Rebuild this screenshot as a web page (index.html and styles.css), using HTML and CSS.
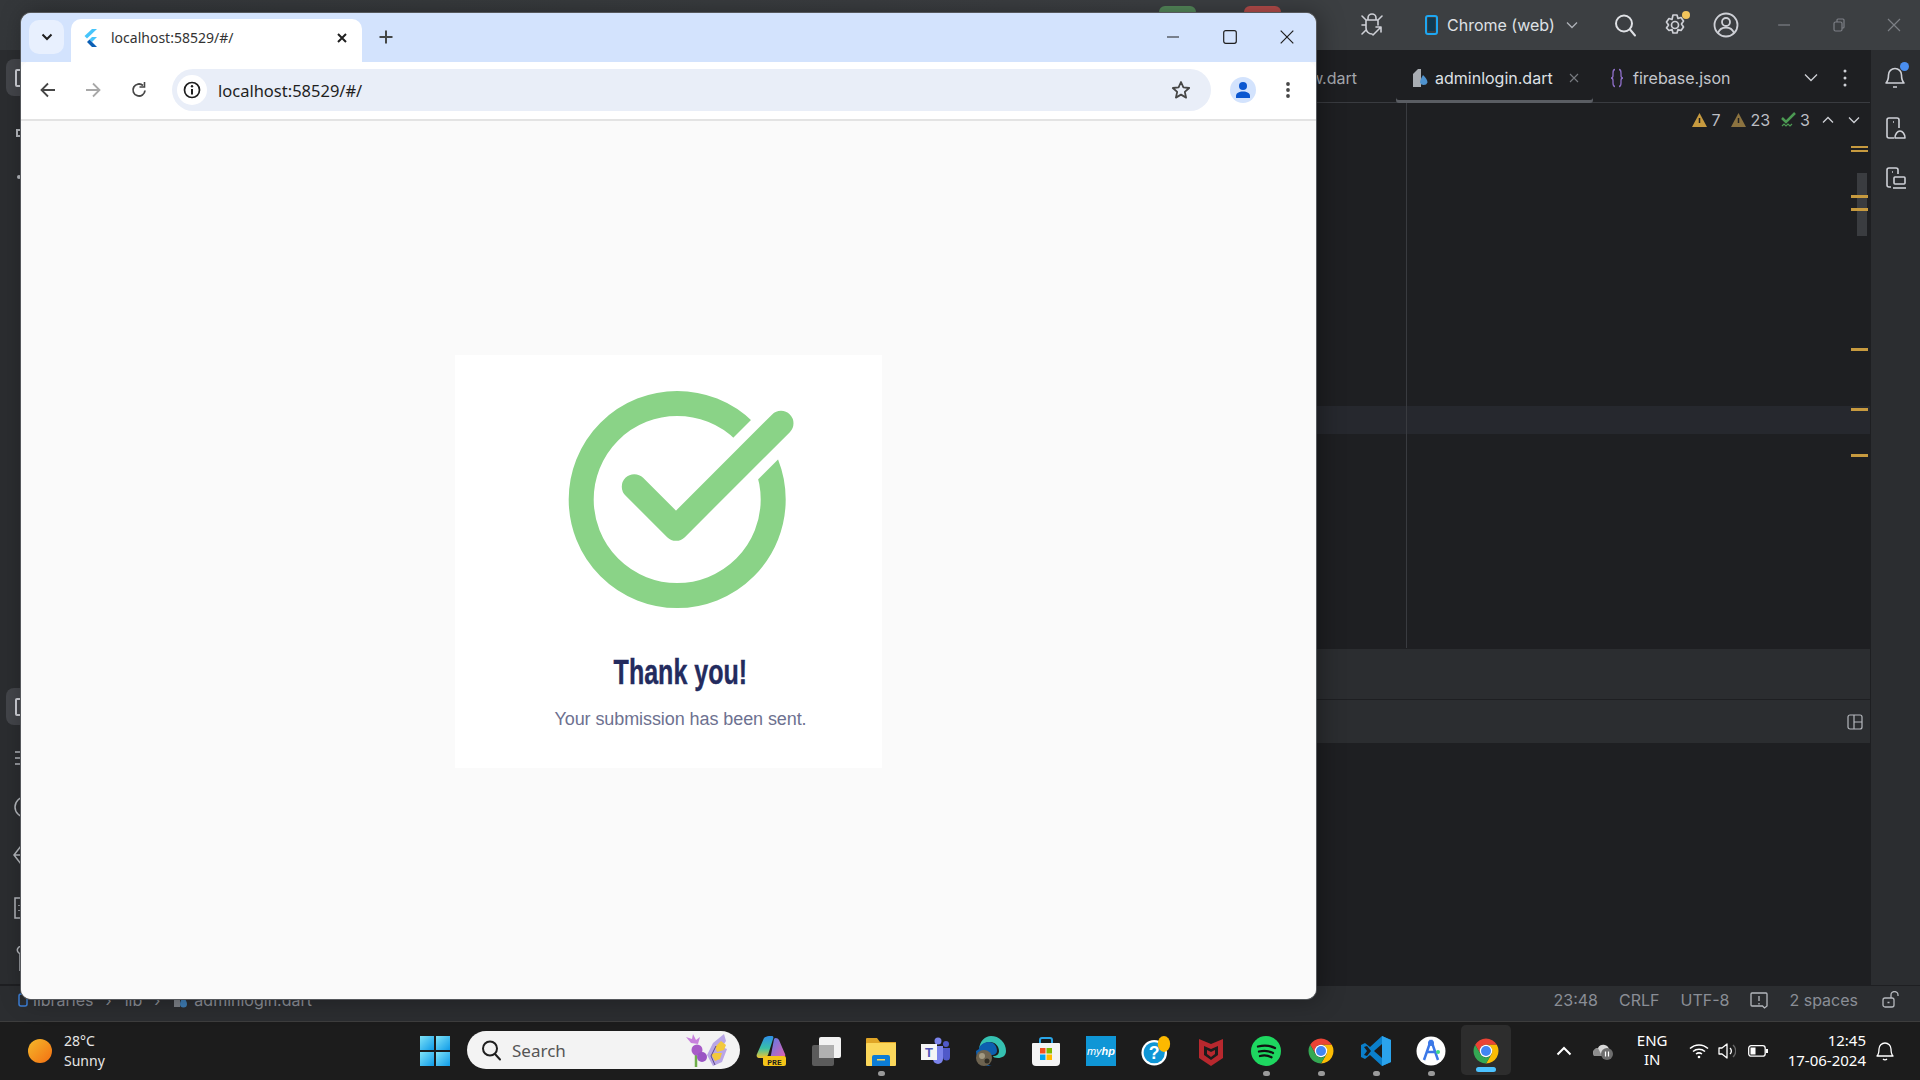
FILE: index.html
```html
<!DOCTYPE html>
<html lang="en">
<head>
<meta charset="utf-8">
<title>localhost:58529/#/</title>
<link rel="stylesheet" href="styles.css">
</head>
<body>
<div class="desktop">

  <header class="titlebar">
    <span class="run-pill green"></span>
    <span class="run-pill red"></span>
    <svg class="ic bug" width="26" height="26" viewBox="0 0 26 26" fill="none" stroke="#ced0d6" stroke-width="1.6" stroke-linecap="round" stroke-linejoin="round"><path d="M9 7V6a4 4 0 0 1 8 0v1M7 8h12v5M7 8v8a6 6 0 0 0 6 6M3 4l4 4M3 13h4M3 22l4-4M23 4l-4 4M14 23l8-8M17 15h5v5"/></svg>
    <svg class="ic phone" width="13" height="20" viewBox="0 0 13 20" fill="none"><rect x="1" y="1" width="11" height="18" rx="2" stroke="#1ea7f2" stroke-width="2"/><rect x="3" y="3" width="7" height="13" fill="#0f3a52"/></svg>
    <span class="run-target">Chrome (web)</span>
    <svg class="chev" width="12" height="8" viewBox="0 0 12 8" fill="none" stroke="#aeb1b7" stroke-width="1.3"><path d="M1 1.5l5 5 5-5"/></svg>
    <div class="tb-actions">
      <svg width="24" height="24" viewBox="0 0 24 24" fill="none" stroke="#dfe1e5" stroke-width="2" stroke-linecap="round"><circle cx="11" cy="10.500" r="8"/><path d="M17 16.500l5 6"/></svg>
      <span class="gear-wrap">
        <svg width="24" height="26" viewBox="0 0 24 26" fill="none" stroke="#ced0d6" stroke-width="1.7" stroke-linejoin="round"><path d="M10 3h4l1 3.500 3-1 2.500 3.500-2 3 2 3-2.500 3.500-3-1-1 3.500h-4l-1-3.500-3 1L3.500 16l2-3-2-3L6 6.500l3 1z"/><circle cx="12" cy="13" r="3.500"/></svg>
        <i class="gear-dot"></i>
      </span>
      <svg width="26" height="26" viewBox="0 0 26 26" fill="none" stroke="#ced0d6" stroke-width="1.8"><circle cx="13" cy="13" r="11.500"/><circle cx="13" cy="10" r="4"/><path d="M5 21c1.500-4 4-5.500 8-5.500s6.500 1.500 8 5.500"/></svg>
    </div>
    <div class="win-actions">
      <svg width="24" height="24" viewBox="0 0 24 24" fill="none" stroke="#7c7f85" stroke-width="1.2"><path d="M6 12h12"/></svg>
      <svg width="24" height="24" viewBox="0 0 24 24" fill="none" stroke="#7c7f85" stroke-width="1.2"><rect x="7" y="9" width="8" height="9" rx="1.500"/><path d="M10 9V7a1 1 0 0 1 1-1h5a1 1 0 0 1 1 1v7a1 1 0 0 1-1 1h-1"/></svg>
      <svg width="24" height="24" viewBox="0 0 24 24" fill="none" stroke="#7c7f85" stroke-width="1.2"><path d="M6 6l12 12M18 6L6 18"/></svg>
    </div>
  </header>

  <div class="ide">
    <aside class="left-rail">
      <div class="rail-top">
        <span class="rail-active"><i class="rail-glyph"></i></span>
        <i class="rail-small"></i>
        <i class="rail-dot"></i>
      </div>
      <div class="rail-bottom">
        <span class="rail-active"><i class="rail-glyph"></i></span>
        <svg class="rail-ic" width="21" height="14" viewBox="0 0 21 14" fill="none" stroke="#b5b8bd" stroke-width="1.500"><path d="M15 1h6M15 7h6M15 13h6"/></svg>
        <svg class="rail-ic wide" width="21" height="22" viewBox="0 0 21 22" fill="none" stroke="#b5b8bd" stroke-width="1.500"><circle cx="25" cy="11" r="10"/></svg>
        <svg class="rail-ic" width="21" height="22" viewBox="0 0 21 22" fill="none" stroke="#b5b8bd" stroke-width="1.500"><path d="M21 2L14 11l7 9M14 11h7"/></svg>
        <svg class="rail-ic wide" width="21" height="22" viewBox="0 0 21 22" fill="none" stroke="#b5b8bd" stroke-width="1.500"><path d="M21 1h-6v20h6M19 8v1M19 13v1"/></svg>
        <svg class="rail-ic" width="21" height="26" viewBox="0 0 21 26" fill="none" stroke="#b5b8bd" stroke-width="1.500"><path d="M21 1.500a3.500 3.500 0 0 0-3 5.500 3 3 0 0 0 2 1.500V26"/></svg>
      </div>
    </aside>

    <main class="editor">
      <div class="editor-tabs">
        <span class="tab-file tab-prev">view.dart</span>
        <span class="tab-item tab-active">
          <svg width="16" height="20" viewBox="0 0 16 20"><path d="M1 6l5-5h3v18H1z" fill="#a9adb3"/><path d="M11 7c3 3 4.500 5 4.500 7.500A4 4 0 0 1 8 14.500C8 12 9.500 10 11 7z" fill="#4f93cf"/></svg>
          <span class="tab-file">adminlogin.dart</span>
          <svg class="tab-x" width="10" height="10" viewBox="0 0 10 10" fill="none" stroke="#777a80" stroke-width="1.100"><path d="M1 1l8 8M9 1L1 9"/></svg>
        </span>
        <span class="tab-item tab-json">
          <svg width="14" height="20" viewBox="0 0 14 20" fill="none" stroke="#8f6fc9" stroke-width="1.300"><path d="M5 1.500C3 1.500 3 3 3 5v2.500C3 9 2.500 10 1 10c1.500 0 2 1 2 2.500V15c0 2 0 3.500 2 3.500M9 1.500c2 0 2 1.500 2 3.500v2.500c0 1.500.5 2.500 2 2.500-1.500 0-2 1-2 2.500V15c0 2 0 3.500-2 3.500"/></svg>
          <span class="tab-file">firebase.json</span>
        </span>
        <span class="tab-tools">
          <svg width="14" height="9" viewBox="0 0 14 9" fill="none" stroke="#ced0d6" stroke-width="1.300"><path d="M1 1.500l6 6 6-6"/></svg>
          <svg width="4" height="18" viewBox="0 0 4 18" fill="#ced0d6"><circle cx="2" cy="2" r="1.500"/><circle cx="2" cy="9" r="1.500"/><circle cx="2" cy="16" r="1.500"/></svg>
        </span>
      </div>
      <div class="code-area">
        <div class="inspect">
          <svg width="15" height="14" viewBox="0 0 15 14"><path d="M7.500 0L15 14H0z" fill="#c79a3f"/><path d="M7.500 5v5" stroke="#1e1f22" stroke-width="1.500"/></svg><span>7</span>
          <svg class="ins-gap" width="15" height="14" viewBox="0 0 15 14"><path d="M7.500 0L15 14H0z" fill="#8c7340"/><path d="M7.500 5v5" stroke="#1e1f22" stroke-width="1.500"/></svg><span>23</span>
          <svg class="ins-gap" width="15" height="16" viewBox="0 0 15 16" fill="none"><path d="M1 6l4 4 9-9" stroke="#4c9a53" stroke-width="2.500"/><path d="M1 14l2-2 2 2 2-2 2 2 2-2" stroke="#4c9a53" stroke-width="1.200"/></svg><span>3</span>
          <svg class="ins-up" width="12" height="8" viewBox="0 0 12 8" fill="none" stroke="#ced0d6" stroke-width="1.300"><path d="M1 6.500l5-5 5 5"/></svg>
          <svg class="ins-down" width="12" height="8" viewBox="0 0 12 8" fill="none" stroke="#ced0d6" stroke-width="1.300"><path d="M1 1.500l5 5 5-5"/></svg>
        </div>
        <div class="caret-line"></div>
        <div class="gutter"></div>
        <div class="scroll-thumb"></div>
        <i class="mark m1"></i><i class="mark m2"></i><i class="mark m3"></i><i class="mark m4"></i><i class="mark m5"></i><i class="mark m6"></i>
      </div>
      <div class="panel-a"></div>
      <div class="panel-b">
        <svg width="16" height="16" viewBox="0 0 16 16" fill="none" stroke="#b5b8bd" stroke-width="1.200"><rect x="1" y="1" width="14" height="14" rx="2"/><path d="M7 1v14M7 8h8"/></svg>
      </div>
      <div class="panel-c"></div>
    </main>

    <aside class="right-rail">
      <span class="bell-wrap">
        <svg width="24" height="26" viewBox="0 0 24 26" fill="none" stroke="#ced0d6" stroke-width="1.600" stroke-linejoin="round"><path d="M3 19c2-2 2.500-4 2.500-8a6.500 6.500 0 0 1 13 0c0 4 .5 6 2.500 8zM10 23h4"/></svg>
        <i class="bell-dot"></i>
      </span>
      <svg width="24" height="24" viewBox="0 0 24 24" fill="none" stroke="#ced0d6" stroke-width="1.600" stroke-linejoin="round"><path d="M11 22H6a2 2 0 0 1-2-2V4a2 2 0 0 1 2-2h8a2 2 0 0 1 2 2v8M10 6h1"/><path d="M12 22c0-4 2.500-7 5-7s5 3 5 7z"/></svg>
      <svg width="24" height="24" viewBox="0 0 24 24" fill="none" stroke="#ced0d6" stroke-width="1.600" stroke-linejoin="round"><path d="M8 21H6a2 2 0 0 1-2-2V4a2 2 0 0 1 2-2h7a2 2 0 0 1 2 2v4M9 6h1"/><rect x="11" y="11" width="11" height="7" rx="1"/><path d="M10 22h13"/></svg>
    </aside>
  </div>

  <footer class="status">
    <nav class="crumbs">
      <svg width="10" height="14" viewBox="0 0 10 14" fill="none" stroke="#3d7fd6" stroke-width="1.500"><rect x="1" y="1" width="8" height="12" rx="2"/></svg>
      <span>libraries</span><b>›</b><span>lib</span><b>›</b>
      <svg width="16" height="16" viewBox="0 0 16 16"><path d="M1 4l3-3h3v14H1z" fill="#7c8087"/><path d="M10 5c2.500 2.500 4 4.500 4 7a3.500 3.500 0 0 1-7 0c0-2.500 1.500-4.500 3-7z" fill="#3f7eb6"/></svg>
      <span>adminlogin.dart</span>
    </nav>
    <div class="status-right">
      <span>23:48</span><span>CRLF</span><span>UTF-8</span>
      <svg width="18" height="17" viewBox="0 0 18 17" fill="none" stroke="#b5b8bd" stroke-width="1.300"><path d="M2 1h14a1 1 0 0 1 1 1v12l-2.500 2-2-2H2a1 1 0 0 1-1-1V2a1 1 0 0 1 1-1zM9 4v5M9 11v1.500"/></svg>
      <span>2 spaces</span>
      <svg class="lock" width="18" height="18" viewBox="0 0 18 18" fill="none" stroke="#b5b8bd" stroke-width="1.300"><rect x="1" y="7" width="11" height="9" rx="2"/><path d="M5.500 11.500h2M9 7V4a3.500 3.500 0 0 1 7 0v1"/></svg>
    </div>
  </footer>

  <div class="taskbar">
    <div class="weather">
      <span class="sun"></span>
      <div class="weather-text"><span>28°C</span><span>Sunny</span></div>
    </div>
    <div class="tb-cell">
      <svg class="tb-icon" width="30" height="30" viewBox="0 0 30 30"><defs><linearGradient id="w" x1="0" y1="0" x2="1" y2="1"><stop offset="0" stop-color="#7fe3f7"/><stop offset="1" stop-color="#0f9be8"/></linearGradient></defs><rect width="14" height="14" fill="url(#w)"/><rect x="16" width="14" height="14" fill="url(#w)"/><rect y="16" width="14" height="14" fill="url(#w)"/><rect x="16" y="16" width="14" height="14" fill="url(#w)"/></svg>
    </div>
    <div class="searchbox">
      <svg width="22" height="22" viewBox="0 0 22 22" fill="none" stroke="#1f1f1f" stroke-width="2" stroke-linecap="round"><circle cx="10" cy="9.500" r="7"/><path d="M15 15l5 5.500"/></svg>
      <span class="search-label">Search</span>
      <svg class="butterfly" width="46" height="34" viewBox="0 0 46 34"><path d="M13 16v18" stroke="#6fae4a" stroke-width="2.500"/><path d="M8 10l-5-6 6 2 1-5 3 6 4-3-2 7z" fill="#c880dd"/><circle cx="14" cy="17" r="5.500" fill="#a85bc8"/><circle cx="19" cy="24" r="5" fill="#9a55c4"/><path d="M41 1l-11 9-6 12 6 11 9-4 5-13-5-2 4-6z" fill="#b9a6e6"/><path d="M38 8l-6 6 2 5 7-2 2-5zM28 21l4 7 5-2 2-6-7 0z" fill="#f3c93c"/><path d="M33 13l-5 10 4 9" stroke="#5c4a8a" stroke-width="1" fill="none"/></svg>
    </div>
    <div class="tb-apps">
      <div class="tb-cell"><svg class="tb-icon" width="30" height="30" viewBox="0 0 30 30"><defs><linearGradient id="cp" x1="0" y1="0" x2="0" y2="1"><stop offset="0" stop-color="#2f8fe9"/><stop offset=".55" stop-color="#38c0a8"/><stop offset="1" stop-color="#f0c52e"/></linearGradient><linearGradient id="cq" x1="0" y1="0" x2="1" y2="1"><stop offset="0" stop-color="#5a7ce8"/><stop offset="1" stop-color="#e45fae"/></linearGradient></defs><path d="M8 2c1-1 3-2 5-2h3c1 0 2 1 1 3l-5 16c-1 2-3 3-5 3H3c-2 0-3-2-2-4z" fill="url(#cp)"/><path d="M18 3c1-2 4-1 5 1l6 14c1 2-1 4-3 4h-9c-2 0-3-1-2-3z" fill="url(#cq)"/><rect x="7" y="20" width="23" height="10" rx="2" fill="#f5c518"/><text class="pre" x="18.500" y="28.500">PRE</text></svg></div>
      <div class="tb-cell"><svg class="tb-icon" width="30" height="30" viewBox="0 0 30 30"><rect x="8" y="1" width="22" height="21" rx="2" fill="#f2f2f2"/><rect x="1" y="9" width="22" height="21" rx="2" fill="#666" fill-opacity=".85"/><rect x="8" y="9" width="15" height="13" fill="#b0b0b0"/></svg></div>
      <div class="tb-cell"><svg class="tb-icon" width="30" height="30" viewBox="0 0 30 30"><path d="M0 3a1 1 0 0 1 1-1h10l3 4h16v23H0z" fill="#e0a526"/><rect y="7" width="30" height="23" rx="1" fill="#fbd75b"/><path d="M6 30v-9a2 2 0 0 1 2-2h14a2 2 0 0 1 2 2v9z" fill="#0c7cd5"/><rect x="11" y="23" width="8" height="1.500" fill="#fbd75b"/></svg><i class="tb-dot"></i></div>
      <div class="tb-cell"><svg class="tb-icon" width="30" height="30" viewBox="0 0 30 30"><circle cx="17" cy="5" r="3.500" fill="#7b83eb"/><circle cx="25" cy="8" r="3" fill="#5059c9"/><path d="M12 10h10v13a5 5 0 0 1-10 0z" fill="#7b83eb"/><path d="M22 12h7v9a3 3 0 0 1-7 0z" fill="#5059c9"/><rect y="8" width="16" height="16" fill="#f5f5f5"/><text class="teams-t" x="8" y="21">T</text></svg></div>
      <div class="tb-cell"><svg class="tb-icon" width="30" height="30" viewBox="0 0 30 30"><path d="M15 0a15 15 0 0 1 15 15c0 5-4 7-8 7-3 0-5-1-5-2 4 0 6-2 6-5 0-5-4-9-9-9-5 0-9 3-11 7C4 5 9 0 15 0z" fill="#35c1b1"/><path d="M3 13c0-3 4-7 10-7 5 0 8 4 8 9 0 2-2 4-5 4-4 0-7 3-6 7 1 3 4 4 6 4A15 15 0 0 1 0 15z" fill="#0d5fb0"/><circle cx="8" cy="22" r="8" fill="#6d6350"/><circle cx="6" cy="20" r="3" fill="#a39a82"/><circle cx="11" cy="25" r="2.500" fill="#2f2b22"/></svg></div>
      <div class="tb-cell"><svg class="tb-icon" width="30" height="30" viewBox="0 0 30 30" fill="none"><path d="M9 8V4a2 2 0 0 1 2-2h8a2 2 0 0 1 2 2v4" stroke="#2aa6e8" stroke-width="2"/><path d="M2 7h26a1 1 0 0 1 1 1v18a4 4 0 0 1-4 4H5a4 4 0 0 1-4-4V8a1 1 0 0 1 1-1z" fill="#f4f4f4"/><rect x="9" y="12" width="5.500" height="5.500" fill="#f25022"/><rect x="15.500" y="12" width="5.500" height="5.500" fill="#7fba00"/><rect x="9" y="18.500" width="5.500" height="5.500" fill="#00a4ef"/><rect x="15.500" y="18.500" width="5.500" height="5.500" fill="#ffb900"/></svg></div>
      <div class="tb-cell"><span class="myhp">my<em>hp</em></span></div>
      <div class="tb-cell"><svg class="tb-icon" width="34" height="34" viewBox="0 0 34 34"><circle cx="15" cy="19" r="14.500" fill="#fff"/><circle cx="15" cy="19" r="12" fill="#0f96d6"/><text class="help-q" x="15" y="26">?</text><ellipse cx="26" cy="9" rx="7" ry="9" fill="#fdb900"/></svg></div>
      <div class="tb-cell"><svg class="tb-icon" width="30" height="30" viewBox="0 0 30 30"><path d="M3 3l12 5 12-5v19l-12 8-12-8z" fill="#b8282e"/><path d="M8 10l7 3 7-3v9l-7 5-7-5z" fill="#1c1c1c"/><path d="M11 14l4 2 4-2v4l-4 3-4-3z" fill="#b8282e"/></svg></div>
      <div class="tb-cell"><svg class="tb-icon" width="30" height="30" viewBox="0 0 30 30" fill="none"><circle cx="15" cy="15" r="15" fill="#1ed760"/><path d="M7 10.500c6-1.500 12-1 17 1.500M8 15.500c5-1.200 10-.8 14 1.500M9 20c4-1 8-.6 11.500 1.200" stroke="#111" stroke-width="2.300" stroke-linecap="round"/></svg><i class="tb-dot"></i></div>
      <div class="tb-cell"><svg class="tb-icon" width="30" height="30" viewBox="0 0 48 48"><path d="M6.680 14A20 20 0 0 1 41.320 14H24A10 10 0 0 0 15.340 29z" fill="#ea4335"/><path d="M41.320 14A20 20 0 0 1 24 44L32.660 29A10 10 0 0 0 24 14z" fill="#fbbc04"/><path d="M24 44A20 20 0 0 1 6.680 14L15.340 29A10 10 0 0 0 32.660 29z" fill="#34a853"/><circle cx="24" cy="24" r="10" fill="#fff"/><circle cx="24" cy="24" r="8" fill="#4285f4"/></svg><i class="tb-dot"></i></div>
      <div class="tb-cell"><svg class="tb-icon" width="30" height="30" viewBox="0 0 30 30"><path d="M21 0l9 4v22l-9 4-12-11-5 4-4-2V9l4-2 5 4z" fill="#0a7fcb"/><path d="M21 0l9 4v22l-9 4z" fill="#2ba3ec"/><path d="M21 8v14l-8-7z" fill="#1c1c1c"/><path d="M3 11l3-1 4 5-4 5-3-1 3-4z" fill="#1c1c1c"/></svg><i class="tb-dot"></i></div>
      <div class="tb-cell"><svg class="tb-icon" width="30" height="30" viewBox="0 0 30 30"><circle cx="15" cy="15" r="14.500" fill="#fff"/><path d="M15 4l-7 20M15 4l7 20M10 16h10" stroke="#3b78e7" stroke-width="2.500" fill="none"/><circle cx="15" cy="7" r="3" fill="#3b78e7"/><circle cx="22" cy="16" r="2" fill="#3ddc84"/></svg><i class="tb-dot"></i></div>
      <div class="tb-cell tb-active"><svg class="tb-icon" width="30" height="30" viewBox="0 0 48 48"><path d="M6.680 14A20 20 0 0 1 41.320 14H24A10 10 0 0 0 15.340 29z" fill="#ea4335"/><path d="M41.320 14A20 20 0 0 1 24 44L32.660 29A10 10 0 0 0 24 14z" fill="#fbbc04"/><path d="M24 44A20 20 0 0 1 6.680 14L15.340 29A10 10 0 0 0 32.660 29z" fill="#34a853"/><circle cx="24" cy="24" r="10" fill="#fff"/><circle cx="24" cy="24" r="8" fill="#4285f4"/></svg><i class="tb-dot tb-pill"></i></div>
    </div>
    <div class="tray">
      <svg width="16" height="10" viewBox="0 0 16 10" fill="none" stroke="#fff" stroke-width="2"><path d="M1.500 8.500L8 2l6.500 6.500"/></svg>
      <svg class="tray-cloud" width="22" height="18" viewBox="0 0 22 18"><path d="M2 14a5 5 0 0 1 4-8 6 6 0 0 1 11 1v7z" fill="#d8d8d8"/><path d="M2 14a5 5 0 0 1 4-8l4 8z" fill="#8d8d8d"/><circle cx="15" cy="12" r="6" fill="#6e6e6e"/><path d="M13.500 9.500v5M16.500 9.500v5" stroke="#fff" stroke-width="1.200"/></svg>
      <div class="lang"><span>ENG</span><span>IN</span></div>
      <svg class="tray-wifi" width="20" height="16" viewBox="0 0 20 16" fill="none" stroke="#fff" stroke-width="1.500"><path d="M1 5.500a13 13 0 0 1 18 0M4 8.500a9 9 0 0 1 12 0M7 11a5 5 0 0 1 6 0"/><circle cx="10" cy="14" r="1.300" fill="#fff" stroke="none"/></svg>
      <svg class="tray-sound" width="18" height="16" viewBox="0 0 18 16" fill="none" stroke="#fff" stroke-width="1.300" stroke-linejoin="round"><path d="M1 5h3l5-4v14l-5-4H1zM12 5a4 4 0 0 1 0 6"/><path d="M15 2a8 8 0 0 1 0 12" stroke="#666"/></svg>
      <svg class="tray-batt" width="20" height="12" viewBox="0 0 20 12" fill="none"><rect x=".7" y=".7" width="16.500" height="10.500" rx="2.500" stroke="#fff" stroke-width="1.300"/><rect x="2.500" y="2.500" width="5" height="7" fill="#fff"/><rect x="18" y="4" width="2" height="4" fill="#fff"/></svg>
      <div class="clock"><span>12:45</span><span>17-06-2024</span></div>
      <svg class="tray-bell" width="18" height="20" viewBox="0 0 18 20" fill="none" stroke="#fff" stroke-width="1.300" stroke-linejoin="round"><path d="M1 15c1.500-1.500 2-3 2-7a6 6 0 0 1 12 0c0 4 .5 5.500 2 7zM7 18c1 1 3 1 4 0"/></svg>
    </div>
  </div>

  <section class="browser">
    <div class="tabstrip">
      <span class="tab-search">
        <svg width="12" height="8" viewBox="0 0 12 8" fill="none" stroke="#1f1f1f" stroke-width="2"><path d="M1.500 1.500L6 6l4.500-4.500"/></svg>
      </span>
      <div class="b-tab">
        <svg class="flutter" width="14" height="18" viewBox="0 0 14 18"><path d="M9 0h5L4 9.500 1.500 7z" fill="#47c5fb"/><path d="M9 8h5l-5 5-2.500-2.500z" fill="#47c5fb"/><path d="M6.500 10.500L9 13l5 5H9l-5-5z" fill="#0a5fb5"/></svg>
        <span class="b-tab-title">localhost:58529/#/</span>
        <svg class="b-tab-x" width="12" height="12" viewBox="0 0 12 12" fill="none" stroke="#1f1f1f" stroke-width="2"><path d="M2 2l8 8M10 2l-8 8"/></svg>
      </div>
      <svg class="new-tab" width="16" height="16" viewBox="0 0 16 16" fill="none" stroke="#444746" stroke-width="2"><path d="M8 1.500v13M1.500 8h13"/></svg>
      <div class="b-win">
        <svg width="14" height="14" viewBox="0 0 14 14" fill="none" stroke="#1f1f1f" stroke-width="1.200"><path d="M1 7h12"/></svg>
        <svg width="14" height="14" viewBox="0 0 14 14" fill="none" stroke="#1f1f1f" stroke-width="1.200"><rect x=".7" y=".7" width="12.600" height="12.600" rx="2"/></svg>
        <svg width="14" height="14" viewBox="0 0 14 14" fill="none" stroke="#1f1f1f" stroke-width="1.200"><path d="M.7.7l12.600 12.600M13.300.7L.7 13.300"/></svg>
      </div>
    </div>
    <div class="toolbar">
      <svg width="18" height="18" viewBox="0 0 18 18" fill="none" stroke="#474747" stroke-width="1.800"><path d="M16 9H2.500M9 2.500L2.500 9 9 15.500"/></svg>
      <svg class="nav-fwd" width="18" height="18" viewBox="0 0 18 18" fill="none" stroke="#a8a8a8" stroke-width="1.800"><path d="M2 9h13.500M9 2.500L15.500 9 9 15.500"/></svg>
      <svg class="nav-reload" width="18" height="18" viewBox="0 0 18 18" fill="none" stroke="#474747" stroke-width="1.800"><path d="M15 9.500A6 6 0 1 1 13 4.500"/><path d="M14.500 1v5h-5" stroke-width="1.600"/></svg>
      <div class="omnibox">
        <span class="site-info">
          <svg width="18" height="18" viewBox="0 0 18 18" fill="none" stroke="#1f1f1f" stroke-width="1.700"><circle cx="9" cy="9" r="7.500"/><path d="M9 8v5.500" stroke-width="2"/><circle cx="9" cy="5.300" r="1.200" fill="#1f1f1f" stroke="none"/></svg>
        </span>
        <span class="url">localhost:58529/#/</span>
        <svg class="star" width="20" height="20" viewBox="0 0 20 20" fill="none" stroke="#474747" stroke-width="1.800" stroke-linejoin="round"><path d="M10 2l2.400 5.400 5.800.6-4.400 3.900 1.300 5.700L10 14.600l-5.100 3 1.300-5.700L1.800 8l5.800-.6z"/></svg>
      </div>
      <span class="profile">
        <svg width="18" height="18" viewBox="0 0 18 18" fill="#0b57d0"><circle cx="9" cy="5" r="4"/><path d="M2 17v-2c0-3 3-4.500 7-4.500s7 1.500 7 4.500v2z"/></svg>
      </span>
      <svg class="kebab" width="4" height="18" viewBox="0 0 4 18" fill="#474747"><circle cx="2" cy="3" r="1.900"/><circle cx="2" cy="9" r="1.900"/><circle cx="2" cy="15" r="1.900"/></svg>
    </div>
    <div class="page">
      <article class="card">
        <svg class="check" width="240" height="240" viewBox="560 380 240 240" fill="none">
          <circle cx="676.200" cy="499.500" r="96" stroke="#8ad387" stroke-width="25"/>
          <path d="M675 528.300L810 393.300" stroke="#fff" stroke-width="47"/>
          <path d="M633.300 486.700L675 528.300L780 423.300" stroke="#8ad387" stroke-width="25" stroke-linecap="round" stroke-linejoin="round"/>
        </svg>
        <h1 class="thanks">Thank you!</h1>
        <p class="sent">Your submission has been sent.</p>
      </article>
    </div>
  </section>
</div>
</body>
</html>
```

FILE: styles.css
```css
* { box-sizing: border-box; }
html, body { margin: 0; padding: 0; }
body { background: #1e1f22; overflow: hidden; font-family: Inter, "Liberation Sans", sans-serif; }
svg { display: block; flex: none; }

.desktop { position: relative; width: 1920px; height: 1080px; display: flex; flex-direction: column; overflow: hidden; }

/* IDE title bar */
.titlebar { height: 50px; flex: none; display: flex; align-items: center; background: linear-gradient(90deg, #34373a, #3c3f42 60%); color: #dfe1e5; }
.run-pill { width: 37px; height: 44px; border-radius: 6px; align-self: flex-start; margin-top: 6px; }
.run-pill.green { background: #54885a; margin-left: 1159px; }
.run-pill.red { background: #b44c4a; margin-left: 48px; }
.bug { margin-left: 78px; }
.phone { margin-left: 40px; }
.run-target { margin-left: 9px; width: 110px; font-size: 16px; white-space: nowrap; color: #dfe1e5; }
.chev { margin-left: 9px; }
.tb-actions { display: flex; align-items: center; gap: 26px; margin-left: 35px; }
.gear-wrap { position: relative; display: block; }
.gear-dot { position: absolute; right: -3px; top: -1px; width: 8px; height: 8px; border-radius: 50%; background: #f2c55c; }
.win-actions { display: flex; align-items: center; gap: 31px; margin-left: 33px; }

/* IDE body */
.ide { flex: 1; display: flex; min-height: 0; }
.left-rail { width: 21px; flex: none; background: #2b2d30; display: flex; flex-direction: column; justify-content: space-between; padding: 9px 0 13px 6px; border-bottom: 1px solid #1e1f22; }
.rail-top, .rail-bottom { display: flex; flex-direction: column; align-items: flex-start; }
.rail-active { width: 30px; height: 37px; border-radius: 8px; background: #43454a; display: flex; align-items: center; padding-left: 9px; }
.rail-glyph { display: block; width: 14px; height: 18px; border: 2px solid #ced0d6; border-radius: 2px; }
.rail-small { display: block; width: 8px; height: 8px; border: 2px solid #b5b8bd; margin: 33px 0 0 10px; }
.rail-dot { display: block; width: 4px; height: 4px; border-radius: 50%; background: #b5b8bd; margin: 38px 0 0 11px; }
.rail-ic { margin-left: -6px; margin-top: 26px; }
.rail-ic.wide { margin-top: 31px; }

.editor { flex: 1; min-width: 0; display: flex; flex-direction: column; background: #1e1f22; }
.editor-tabs { height: 53px; flex: none; display: flex; align-items: center; padding: 3px 0 0 1236px; border-bottom: 1px solid #393b40; color: #dfe1e5; font-size: 16px; }
.tab-file { white-space: nowrap; }
.tab-prev { color: #a5a8ae; width: 100px; text-align: right; }
.tab-item { display: flex; align-items: center; height: 100%; }
.tab-active { margin-left: 39px; width: 197px; padding-left: 16px; gap: 7px; box-shadow: inset 0 -3px 0 #5a5d63; border-radius: 0 0 3px 3px; margin-top: -3px; padding-top: 3px; height: 53px; }
.tab-x { margin-left: 9px; }
.tab-json { margin-left: 17px; gap: 9px; color: #c3c6cc; }
.tab-tools { margin-left: auto; display: flex; align-items: center; gap: 25px; padding-right: 23px; }

.code-area { flex: none; height: 546px; position: relative; }
.inspect { display: flex; align-items: center; justify-content: flex-end; height: 34px; padding-right: 10px; gap: 4px; color: #bcbec4; font-size: 16px; }
.ins-gap { margin-left: 7px; }
.ins-up { margin-left: 8px; }
.ins-down { margin-left: 10px; }
.caret-line { position: absolute; left: 0; right: 0; top: 303px; height: 28px; background: #26282e; }
.gutter { position: absolute; left: 1385px; top: 0; bottom: 1px; width: 1px; background: #393b40; }
.scroll-thumb { position: absolute; right: 3px; top: 70px; width: 10px; height: 63px; background: #3a3c40; }
.mark { position: absolute; right: 2px; width: 17px; height: 3px; background: #c79a3f; }
.m1 { top: 43px; box-shadow: 0 4px 0 #c79a3f; height: 2px; }
.m2 { top: 92px; }
.m3 { top: 105px; }
.m4 { top: 245px; }
.m5 { top: 305px; }
.m6 { top: 351px; }
.panel-a { height: 51px; flex: none; background: #2b2d30; border-bottom: 1px solid #1e1f22; }
.panel-b { height: 43px; flex: none; background: #2b2d30; display: flex; align-items: center; justify-content: flex-end; padding-right: 7px; }
.panel-c { flex: 1; background: #1e1f22; }

.right-rail { width: 50px; flex: none; background: #2b2d30; border-left: 1px solid #1e1f22; display: flex; flex-direction: column; align-items: center; padding: 14px 2px 0 0; gap: 26px; }
.bell-wrap { position: relative; display: block; }
.bell-dot { position: absolute; right: -2px; top: -2px; width: 9px; height: 9px; border-radius: 50%; background: #4a8eef; }

/* Status bar */
.status { height: 36px; flex: none; background: #2b2d30; border-top: 1px solid #1e1f22; display: flex; align-items: center; justify-content: space-between; padding: 0 20px 7px 18px; color: #8a8e96; font-size: 16px; }
.crumbs { display: flex; align-items: center; gap: 5px; }
.crumbs b { font-weight: 400; margin: 0 8px 0 7px; }
.status-right { display: flex; align-items: center; gap: 21px; }
.lock { margin-left: 3px; }

/* Taskbar */
.taskbar { height: 59px; flex: none; display: flex; background: #1c1c1c; border-top: 1px solid #3d3d3d; color: #fff; font-family: "Noto Sans", sans-serif; }
.weather { width: 407px; flex: none; display: flex; align-items: center; padding: 0 0 1px 28px; gap: 12px; }
.sun { width: 24px; height: 24px; border-radius: 50%; background: linear-gradient(135deg, #f5b92a, #f36f12); }
.weather-text { display: flex; flex-direction: column; font-size: 14px; line-height: 20px; color: #e6e6e6; }
.tb-cell { width: 55px; flex: none; height: 58px; display: flex; flex-direction: column; align-items: center; padding-top: 14px; position: relative; }
.tb-icon { height: 30px; overflow: visible; }
.tb-dot { display: block; width: 7px; height: 5px; border-radius: 3px; background: #9a9a9a; margin-top: 5px; }
.tb-pill { width: 20px; background: #4cc2ff; }
.tb-active { background: #2d2d2d; width: 50px; margin: 3px 2.500px 0; height: 50px; padding-top: 11px; border-radius: 5px; }
.tb-active .tb-dot { margin-top: 1px; }
.searchbox { width: 273px; height: 38px; flex: none; margin: 9px 3.500px 0 5px; border-radius: 19px; background: #f3f3f3; display: flex; align-items: center; padding: 0 11px 0 13px; }
.search-label { margin-left: 10px; color: #555; font-size: 17px; }
.butterfly { margin-left: auto; }
.tb-apps { display: flex; }
.pre { font: 700 8px "Liberation Mono", monospace; text-anchor: middle; fill: #1c1c1c; }
.teams-t { font: 700 13px "Liberation Sans", sans-serif; text-anchor: middle; fill: #4f55b8; }
.help-q { font: 700 20px "Liberation Sans", sans-serif; text-anchor: middle; fill: #fff; }
.myhp { width: 30px; height: 30px; background: #0f96d6; color: #fff; font: italic 11px/30px "Liberation Sans", sans-serif; text-align: center; }
.myhp em { font-weight: 700; }
.tray { margin-left: auto; display: flex; align-items: center; padding-right: 26px; font-size: 15px; }
.tray-cloud { margin-left: 19.500px; }
.lang { display: flex; flex-direction: column; align-items: center; line-height: 19px; margin: -3px 0 0 21.500px; width: 34px; }
.tray-wifi { margin-left: 19.500px; }
.tray-sound { margin-left: 9px; }
.tray-batt { margin-left: 12px; }
.clock { display: flex; flex-direction: column; align-items: flex-end; line-height: 20px; margin: -3px 0 0 20px; }
.tray-bell { margin-left: 10px; }

/* Browser window */
.browser { position: absolute; left: 21px; top: 13px; width: 1295px; height: 986px; border-radius: 10px; overflow: hidden; display: flex; flex-direction: column; background: #fafafa; box-shadow: 0 0 0 1px #55585c, 4px 0 24px rgba(0,0,0,.35); }
.tabstrip { height: 49px; flex: none; background: #d3e3fd; display: flex; padding-left: 8px; position: relative; }
.tab-search { width: 35px; height: 34px; margin-top: 7px; border-radius: 10px; background: #e8f0fe; display: flex; align-items: center; justify-content: center; }
.b-tab { width: 291px; margin-left: 7px; margin-top: 6px; background: #fff; border-radius: 10px 10px 0 0; display: flex; align-items: center; padding: 0 14px 6px 12px; }
.flutter { margin-left: 0; }
.b-tab-title { margin-left: 14px; font: 14px "Noto Sans", sans-serif; color: #333; white-space: nowrap; }
.b-tab-x { margin-left: auto; }
.new-tab { margin: 16px 0 0 16px; }
.b-win { margin-left: auto; display: flex; align-items: flex-start; padding: 17px 22px 0 0; gap: 43px; }
.toolbar { height: 60px; flex: none; background: #fff; border-radius: 10px 10px 0 0; margin-top: -1px; display: flex; align-items: center; padding: 0 0 0 18px; border-bottom: 2px solid #e3e3e3; }
.nav-fwd { margin-left: 27px; }
.nav-reload { margin-left: 28px; }
.omnibox { width: 1039px; height: 42px; margin-left: 24px; border-radius: 21px; background: #e9eef8; display: flex; align-items: center; padding: 0 20px 0 5px; }
.site-info { width: 30px; height: 30px; border-radius: 50%; background: #fff; display: flex; align-items: center; justify-content: center; }
.url { margin-left: 11px; font: 16.500px "Noto Sans", sans-serif; color: #1f1f1f; }
.star { margin-left: auto; }
.profile { width: 26px; height: 26px; border-radius: 50%; background: #d3e3fd; margin-left: 19px; display: flex; align-items: center; justify-content: center; }
.kebab { margin-left: 30px; }
.page { flex: 1; background: #fafafa; padding: 234px 0 0 434px; }
.card { width: 427px; height: 413px; background: #fff; padding: 25px 0 0 24px; display: flex; flex-direction: column; align-items: center; }
.thanks { margin: 30px 0 0; font: 700 35px/44px "Liberation Sans", sans-serif; color: #232b5e; transform: scaleX(.715); white-space: nowrap; -webkit-text-stroke: .4px #232b5e; }
.sent { margin: 13px 0 0; font: 18px/24px "Liberation Sans", sans-serif; color: #6d7190; letter-spacing: -.08px; }
```
